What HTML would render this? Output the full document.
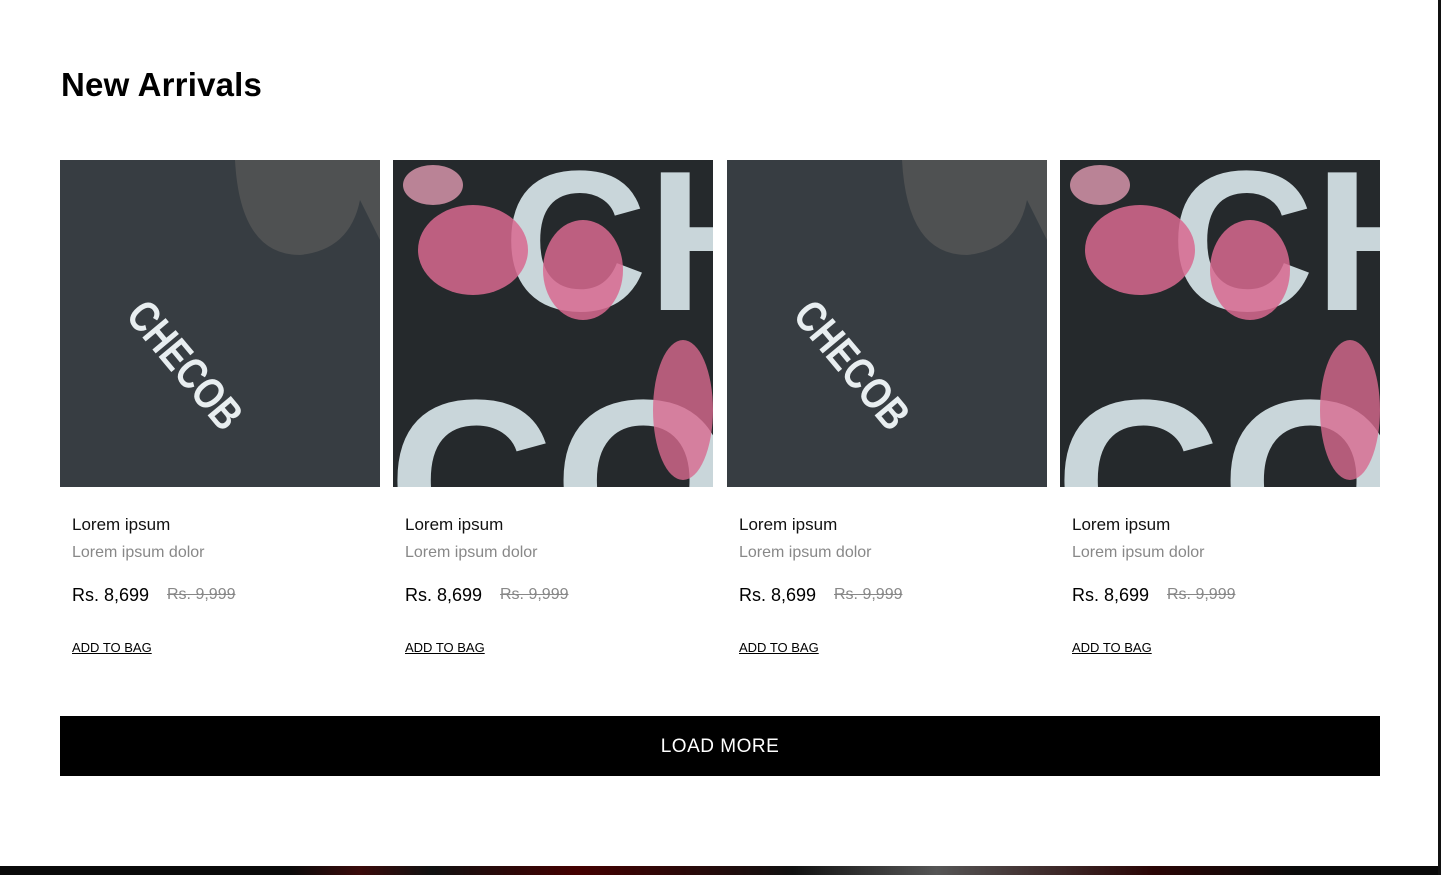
<!DOCTYPE html>
<html><head><style>
body{margin:0;width:1441px;height:875px;overflow:hidden;background:#fff;font-family:"Liberation Sans",sans-serif;position:relative}
h1{position:absolute;left:61px;top:66px;margin:0;font-size:33px;font-weight:bold;color:#000;letter-spacing:0.2px}
.card{position:absolute;top:160px;width:320px}
.img{width:320px;height:327px;overflow:hidden}
.t{position:absolute;left:12px;top:355px;font-size:17px;color:#111}
.s{position:absolute;left:12px;top:384px;font-size:16px;color:#888}
.p{position:absolute;left:12px;top:425px;font-size:18px;color:#000}
.o{position:absolute;left:107px;top:426px;font-size:16px;color:#888;text-decoration:line-through}
.a{position:absolute;left:12px;top:480px;font-size:13px;color:#000;text-decoration:underline}
.btn{position:absolute;left:60px;top:716px;width:1320px;height:60px;background:#000;color:#fff;font-size:19px;text-align:center;line-height:61px;letter-spacing:0.5px}
.foot{position:absolute;left:0;top:866px;width:1441px;height:9px;background:linear-gradient(90deg,#0a0a0a 0,#0a0a0a 20%,#3a0a0a 25%,#111 30%,#400 40%,#111 55%,#555 65%,#2a0505 80%,#0a0a0a 90%)}
.bar{position:absolute;right:0;top:0;width:3px;height:875px;background:#111}
</style></head><body>
<h1>New Arrivals</h1>
<div class="card" style="left:60px"><div class="img"><svg width="320" height="327"><rect width="320" height="327" fill="#4f5152"/><path d="M0 0 H175 Q180 95 240 95 Q290 90 300 40 L330 100 V327 H0Z" fill="#373d42"/><g transform="translate(125,205) rotate(50) scale(0.8,1)"><text x="0" y="15" text-anchor="middle" fill="#e8eef0" font-size="44" font-weight="bold">CHECOB</text></g></svg></div>
<div class="t">Lorem ipsum</div><div class="s">Lorem ipsum dolor</div><div class="p">Rs. 8,699</div><div class="o">Rs. 9,999</div><div class="a">ADD TO BAG</div></div>
<div class="card" style="left:393px"><div class="img"><svg width="320" height="327"><rect width="320" height="327" fill="#25292c"/><text x="110" y="150" fill="#c9d6da" font-size="200" font-weight="bold">CH</text><text x="-5" y="400" fill="#c9d6da" font-size="230" font-weight="bold">COB</text><ellipse cx="80" cy="90" rx="55" ry="45" fill="#d8698f" opacity=".85"/><ellipse cx="190" cy="110" rx="40" ry="50" fill="#d8698f" opacity=".85"/><ellipse cx="290" cy="250" rx="30" ry="70" fill="#d8698f" opacity=".8"/><ellipse cx="40" cy="25" rx="30" ry="20" fill="#e09ab2" opacity=".8"/></svg></div>
<div class="t">Lorem ipsum</div><div class="s">Lorem ipsum dolor</div><div class="p">Rs. 8,699</div><div class="o">Rs. 9,999</div><div class="a">ADD TO BAG</div></div>
<div class="card" style="left:727px"><div class="img"><svg width="320" height="327"><rect width="320" height="327" fill="#4f5152"/><path d="M0 0 H175 Q180 95 240 95 Q290 90 300 40 L330 100 V327 H0Z" fill="#373d42"/><g transform="translate(125,205) rotate(50) scale(0.8,1)"><text x="0" y="15" text-anchor="middle" fill="#e8eef0" font-size="44" font-weight="bold">CHECOB</text></g></svg></div>
<div class="t">Lorem ipsum</div><div class="s">Lorem ipsum dolor</div><div class="p">Rs. 8,699</div><div class="o">Rs. 9,999</div><div class="a">ADD TO BAG</div></div>
<div class="card" style="left:1060px"><div class="img"><svg width="320" height="327"><rect width="320" height="327" fill="#25292c"/><text x="110" y="150" fill="#c9d6da" font-size="200" font-weight="bold">CH</text><text x="-5" y="400" fill="#c9d6da" font-size="230" font-weight="bold">COB</text><ellipse cx="80" cy="90" rx="55" ry="45" fill="#d8698f" opacity=".85"/><ellipse cx="190" cy="110" rx="40" ry="50" fill="#d8698f" opacity=".85"/><ellipse cx="290" cy="250" rx="30" ry="70" fill="#d8698f" opacity=".8"/><ellipse cx="40" cy="25" rx="30" ry="20" fill="#e09ab2" opacity=".8"/></svg></div>
<div class="t">Lorem ipsum</div><div class="s">Lorem ipsum dolor</div><div class="p">Rs. 8,699</div><div class="o">Rs. 9,999</div><div class="a">ADD TO BAG</div></div>
<div class="btn">LOAD MORE</div>
<div class="foot"></div>
<div class="bar"></div>
</body></html>
